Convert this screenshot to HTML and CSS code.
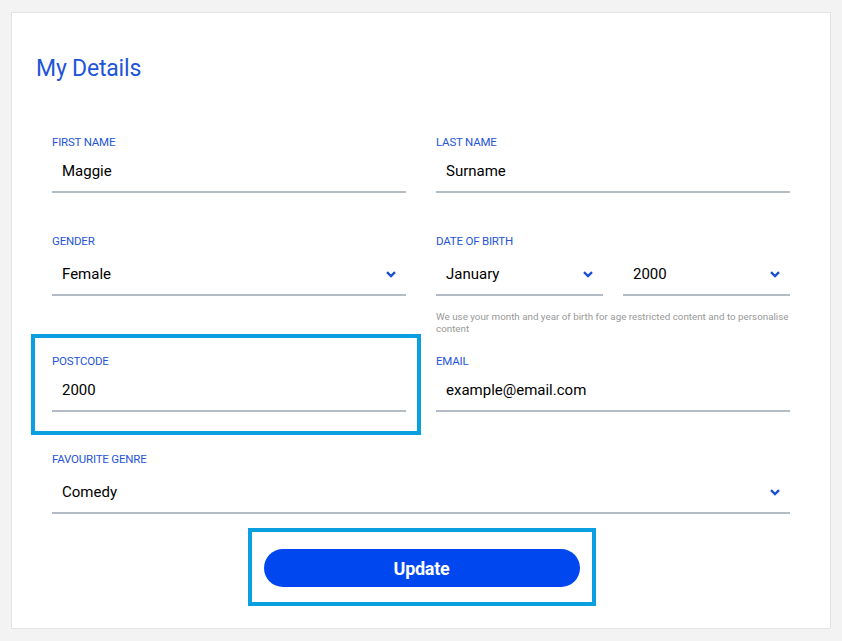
FILE: index.html
```html
<!DOCTYPE html>
<html lang="en">
<head>
    <meta charset="utf-8" />
    <title>My Details</title>
    <link rel="stylesheet" href="styles.css">
</head>
<body>
<div class="card">
    <h1 class="title">My Details</h1>
    <form class="details">
        <div class="row">
            <div class="field">
                <label>First Name</label>
                <input type="text" value="Maggie" />
            </div>
            <div class="field">
                <label>Last Name</label>
                <input type="text" value="Surname" />
            </div>
        </div>
        <div class="row">
            <div class="field">
                <label>Gender</label>
                <div class="select">
                    <select><option>Female</option></select>
                    <svg class="chev" width="10" height="7" viewBox="0 0 10 7"><path d="M1 1.2 L5 5 L9 1.2" fill="none" stroke="#1a4fd6" stroke-width="2.4"/></svg>
                </div>
            </div>
            <div class="field">
                <label>Date of Birth</label>
                <div class="dob">
                    <div class="select">
                        <select><option>January</option></select>
                        <svg class="chev" width="10" height="7" viewBox="0 0 10 7"><path d="M1 1.2 L5 5 L9 1.2" fill="none" stroke="#1a4fd6" stroke-width="2.4"/></svg>
                    </div>
                    <div class="select">
                        <select><option>2000</option></select>
                        <svg class="chev" width="10" height="7" viewBox="0 0 10 7"><path d="M1 1.2 L5 5 L9 1.2" fill="none" stroke="#1a4fd6" stroke-width="2.4"/></svg>
                    </div>
                </div>
                <p class="hint">We use your month and year of birth for age restricted content and to personalise content</p>
            </div>
        </div>
        <div class="row row3">
            <div class="field marked">
                <label>Postcode</label>
                <input type="text" value="2000" />
            </div>
            <div class="field">
                <label>Email</label>
                <input type="text" value="example@email.com" />
            </div>
        </div>
        <div class="row row4">
            <div class="field wide">
                <label>Favourite Genre</label>
                <div class="select">
                    <select><option>Comedy</option></select>
                    <svg class="chev" width="10" height="7" viewBox="0 0 10 7"><path d="M1 1.2 L5 5 L9 1.2" fill="none" stroke="#1a4fd6" stroke-width="2.4"/></svg>
                </div>
            </div>
        </div>
        <div class="actions">
            <div class="btnbox">
                <button type="button" class="update">Update</button>
            </div>
        </div>
    </form>
</div>
</body>
</html>
```

FILE: styles.css
```css
* {padding:0; margin:0; box-sizing:border-box}
body {background:#f3f3f3; font-family:Roboto, "Noto Sans", Arial, sans-serif; padding:12px 11px 13px 11px}
.card {width:820px; height:617px; background:#fff; border:1px solid #e4e4e4}
.title {font-weight:400; font-size:23px; line-height:30px; color:#1f55d8; padding:41px 0 0 24px; letter-spacing:-0.2px}
.details {padding:0 39px 0 40px}
.row {display:grid; grid-template-columns:354px 354px; column-gap:30px; margin-top:41px}
.row:first-child {margin-top:51px}
.row3 {margin-top:19px}
.row4 {margin-top:40px}
.field {position:relative}
.field.wide {grid-column:1 / span 2}
.field label {display:block; font-size:11.5px; line-height:14px; text-transform:uppercase; color:#2656d6; letter-spacing:-0.2px}
.field input, .field select {display:block; width:100%; height:44px; border:none; border-bottom:2px solid #b3bbc5; background:#fff; padding:1px 10px 0 10px; font-family:Roboto, Arial, sans-serif; font-size:15px; color:#000; outline:none; appearance:none; -webkit-appearance:none; border-radius:0}
.select {position:relative; margin-top:4px}
.select .chev {position:absolute; right:10px; top:19px}
.dob {display:flex; gap:20px}
.dob .select {flex:1}
.hint {font-size:9.8px; line-height:12px; color:#999; margin-top:15px}
.marked::after {content:""; position:absolute; left:-21px; right:-15px; top:-20px; bottom:-23px; border:4px solid #0aa0e0}
.actions {display:flex; justify-content:center; margin-top:14px}
.btnbox {border:4px solid #0aa0e0; padding:17px 12px 15px 12px}
.update {display:block; width:316px; height:38px; border:none; border-radius:19px; background:#0047f0; color:#fff; font-family:Roboto, Arial, sans-serif; font-weight:700; font-size:18px; letter-spacing:-0.3px}
```
